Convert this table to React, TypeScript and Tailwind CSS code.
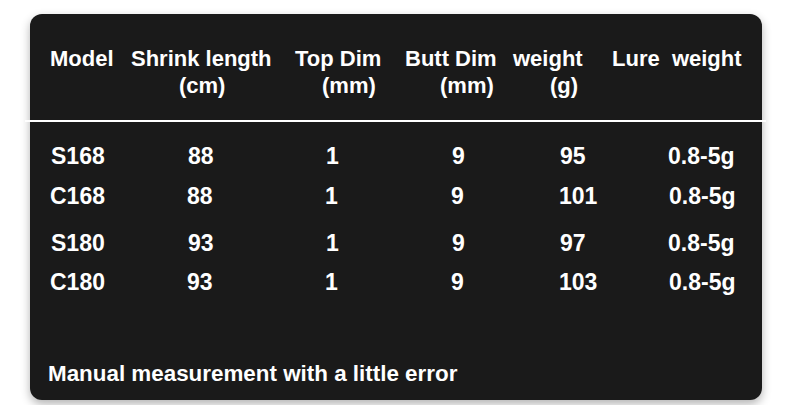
import React from 'react';

const headers = [
  { w: 'w-[81px]', top: 'Model', sub: null, pad: '' },
  { w: 'w-[164px]', top: 'Shrink length', sub: '(cm)', pad: 'pl-[48px]' },
  { w: 'w-[110px]', top: 'Top Dim', sub: '(mm)', pad: 'pl-[27px]' },
  { w: 'w-[108px]', top: 'Butt Dim', sub: '(mm)', pad: 'pl-[35px]' },
  { w: 'w-[99px]', top: 'weight', sub: '(g)', pad: 'pl-[37px]' },
  { w: 'flex-1', top: 'Lure  weight', sub: null, pad: '' },
];

const rows = [
  { cells: ['S168', '88', '1', '9', '95', '0.8-5g'], mt: 'mt-[21px]', shift: false },
  { cells: ['C168', '88', '1', '9', '101', '0.8-5g'], mt: 'mt-[14px]', shift: true },
  { cells: ['S180', '93', '1', '9', '97', '0.8-5g'], mt: 'mt-[21px]', shift: false },
  { cells: ['C180', '93', '1', '9', '103', '0.8-5g'], mt: 'mt-[13px]', shift: true },
];

// body columns start at 51, 188, 326, 452, 560, 668 (page x)
const bodyCols = ['w-[137px]', 'w-[138px]', 'w-[126px]', 'w-[108px]', 'w-[108px]', 'flex-1'];

const App = () => {
  return (
    <div className="w-[791px] h-[405px] bg-white overflow-hidden pt-[14px] pl-[30px]" style={{ fontFamily: '"Liberation Sans", Arial, sans-serif' }}>
      <div className="w-[732px] h-[386px] rounded-[12px] bg-[#1a1a1a] text-white font-bold text-[22px] shadow-[0_4px_10px_rgba(0,0,0,0.3)] flex flex-col">
        {/* header */}
        <div className="flex pl-[20px] pt-[31px] leading-[27px]">
          {headers.map((h, i) => (
            <div key={i} className={`${h.w} flex flex-col`}>
              <span className="whitespace-pre">{h.top}</span>
              {h.sub && <span className={h.pad}>{h.sub}</span>}
            </div>
          ))}
        </div>

        <div className="h-[2px] bg-white mt-[21px] -ml-[5px] -mr-[4px]" />

        {/* rows */}
        <div className="flex flex-col pl-[21px] leading-[26px] text-[23px]">
          {rows.map((r, i) => (
            <div key={i} className={`flex ${r.mt}`}>
              {r.cells.map((c, j) => {
                let extra = '';
                if (j === 0 && c.startsWith('C')) extra = '-ml-[1px] pr-[1px]';
                if (j === 5 && r.shift) extra = 'pl-[2px]';
                return (
                  <span key={j} className={`${bodyCols[j]} ${extra}`}>
                    {c}
                  </span>
                );
              })}
            </div>
          ))}
        </div>

        <div className="mt-auto pl-[18px] pb-[13px] leading-[26px] text-[22.4px]">
          Manual measurement with a little error
        </div>
      </div>
    </div>
  );
};

export default App;
